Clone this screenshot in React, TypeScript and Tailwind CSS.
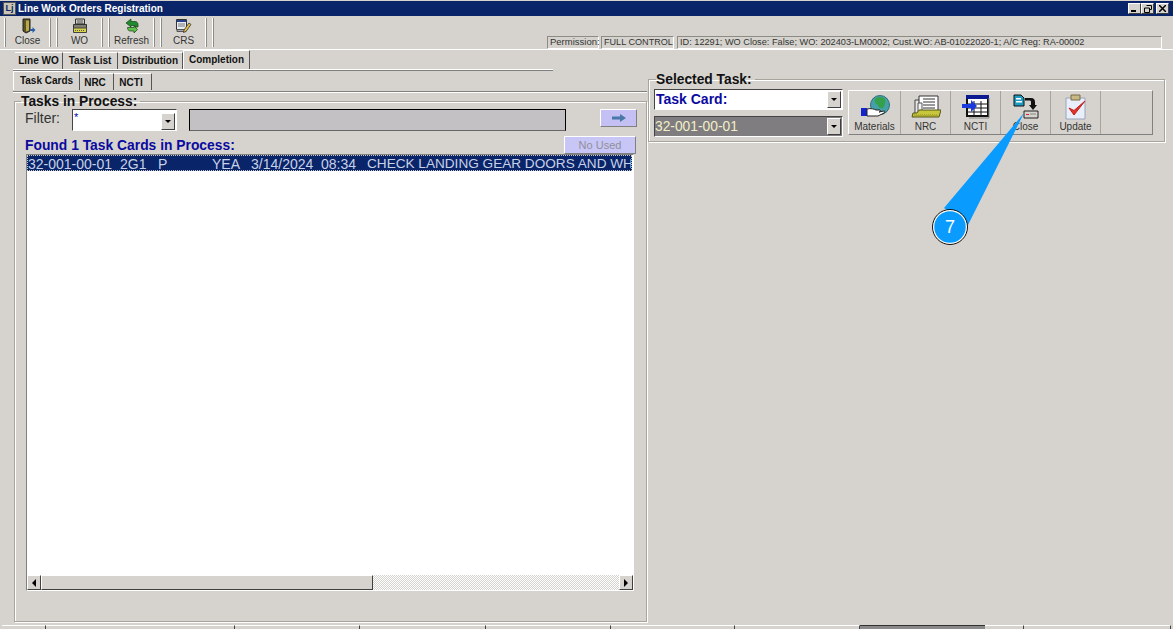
import type { ReactNode } from "react";

// toolbar icons
function DoorIcon() {
  return (
    <svg width="16" height="16" viewBox="0 0 16 16">
      <path d="M3 1h7v12l-4 2-3-2z" fill="#5c5220" stroke="#222" />
      <path d="M6 2.500h3v10l-3 1z" fill="#b8a850" />
      <path d="M10 11h2.500V9l3 3-3 3v-2H10z" fill="#2a5ea8" />
    </svg>
  );
}

function PrinterIcon() {
  return (
    <svg width="16" height="16" viewBox="0 0 16 16">
      <path d="M3.500 1h9v5h-9z" fill="#d0d0c8" stroke="#333" />
      <path d="M5 3h6M5 5h6" stroke="#555" />
      <path d="M1.500 6.500h13v5h-13z" fill="#7f7f70" stroke="#333" />
      <path d="M1.500 10h13v4.500h-13z" fill="#d8d44a" stroke="#444" />
      <path d="M3 12.500h10" stroke="#555" strokeDasharray="1 1" />
    </svg>
  );
}

function RefreshIcon() {
  return (
    <svg width="16" height="16" viewBox="0 0 16 16">
      <path d="M2 5 7 1v2.500h4c2 0 3 1.500 3 3V9h-3V7.500H7V9z" fill="#1f8a2e" stroke="#164016" strokeWidth=".7" />
      <path d="M5 9.500h5V8l3.500 3.500L10 15v-2H6c-1.500 0-2.500-1.500-2.500-3.500z" fill="#5fc04a" stroke="#164016" strokeWidth=".7" />
    </svg>
  );
}

function CrsIcon() {
  return (
    <svg width="17" height="16" viewBox="0 0 17 16">
      <path d="M1.500 1.500h10v10h-10z" fill="#e8ecf4" stroke="#333" />
      <path d="M2 2h9v2H2z" fill="#27408b" />
      <path d="M3 6h7M3 8h7" stroke="#777" />
      <path d="M2 11.500h9v2H2z" fill="#a8a8a8" stroke="#555" />
      <path d="M9 12 14 5l2 1.500-5 7-2.500 1z" fill="#e2c24a" stroke="#333" strokeWidth=".8" />
    </svg>
  );
}

// button panel icons
function GlobeHandIcon() {
  return (
    <svg width="30" height="24" viewBox="0 0 30 24">
      <circle cx="20" cy="10" r="9.500" fill="#45a0a8" stroke="#2f6f78" />
      <path d="M15 4c3-3 8-2 10 0 1 3 0 6-2 9-3 1-5-1-5-3-2-1-4-3-3-6z" fill="#35a04a" />
      <path d="M1 13h6v8H1z" fill="#1526c8" />
      <path d="M7 14c4-1 7 0 9 1h4c1 1 0 2-1 2l5-1c1 0 1 1 0 2l-6 3H7z" fill="#fff" stroke="#222" />
    </svg>
  );
}

function FolderIcon() {
  return (
    <svg width="30" height="26" viewBox="0 0 30 26">
      <path d="M4 6h6v14H4z" fill="#e8e8e8" stroke="#444" />
      <path d="M8 2h19v17H8z" fill="#fff" stroke="#333" />
      <path d="M12 5h12M12 8h12M12 11h12M12 14h12" stroke="#333" />
      <path d="M7 9h4v11H7z" fill="#f4f4f4" stroke="#555" />
      <path d="M2 19 1 23h27l2-7H8l-2 3z" fill="#c8c63a" stroke="#55551a" />
      <path d="M3 21h24M4 22h23" stroke="#8e8e20" strokeDasharray="1 1" />
    </svg>
  );
}

function GridArrowIcon() {
  return (
    <svg width="28" height="24" viewBox="0 0 28 24">
      <path d="M5 1h21v20H5z" fill="#fff" stroke="#111" strokeWidth="2" />
      <path d="M4 0h23v4H4z" fill="#0b1a8e" />
      <path d="M12 6v14M19 6v14M6 9h19M6 13h19M6 17h19" stroke="#111" />
      <path d="M27 3v20H7" fill="none" stroke="#888" />
      <path d="M0 9h9V5l6 6-6 6v-4H0z" fill="#1a3ae0" />
    </svg>
  );
}

function CloseTaskIcon() {
  return (
    <svg width="26" height="26" viewBox="0 0 26 26">
      <path d="M1 1h7l3 3v8H1z" fill="#1f9ac0" stroke="#111" />
      <path d="M3 4h5v1.500H3zM3 7h6v1.500H3z" fill="#fff" />
      <path d="M12 4h6c3 0 4 2 4 4v3h2l-4 5-4-5h2V8c0-1-.5-1.500-1.500-1.500H12z" fill="#111" />
      <path d="M11 17h14v7H11z" fill="#d6d3ce" stroke="#222" />
      <path d="M13 20h3v1h-3z" fill="#d8232a" />
      <path d="M17 20h6" stroke="#888" />
    </svg>
  );
}

function ClipboardCheckIcon() {
  return (
    <svg width="24" height="26" viewBox="0 0 24 26">
      <path d="M2 4h19v21H2z" fill="#e8effa" stroke="#9aa4b8" />
      <path d="M7 1h9v5H7z" fill="#c8b888" stroke="#7a6c44" />
      <path d="M5 14 10 21 21 7 10 16.500z" fill="#e0342a" stroke="#c0201a" />
    </svg>
  );
}

function ToolButton({ icon, label }: { icon: ReactNode; label: string }) {
  return (
    <div className="w-[43px] flex flex-col items-center -mt-[1px]">
      <div className="h-[18px] flex items-center">{icon}</div>
      <span className="text-[10px] leading-[12px] text-[#333]">{label}</span>
    </div>
  );
}

function ToolSep({ gap }: { gap?: boolean }) {
  return <div className={`w-[2px] h-[29px] border-l border-r border-l-[#fff] border-r-[#8c8c84] ${gap ? "ml-[5px]" : ""}`} />;
}

function Tab({ label, className, active }: { label: string; className: string; active?: boolean }) {
  return (
    <div
      className={`${className} flex items-center justify-center font-bold text-[10px] text-[#111] border-t border-t-white border-r border-r-[#555] ${
        active ? "h-[19px] pb-[2px] border-l border-l-white" : "h-[17px]"
      }`}
    >
      {label}
    </div>
  );
}

function ComboArrow() {
  return (
    <div className="w-[14px] h-[17px] shrink-0 bg-[#d6d3ce] border border-t-white border-l-white border-r-[#404040] border-b-[#404040] flex items-center justify-center">
      <div className="w-0 h-0 border-l-[3px] border-r-[3px] border-t-[3px] border-l-transparent border-r-transparent border-t-black" />
    </div>
  );
}

function PanelButton({ icon, label, width = "w-[50px]" }: { icon: ReactNode; label: string; width?: string }) {
  return (
    <div className={`${width} h-full flex flex-col items-center justify-end pb-[1px] border-r border-r-[#a8a49c]`}>
      <div className="flex-1 flex items-center pt-[1px]">{icon}</div>
      <span className="text-[10px] leading-[12px] text-[#333]">{label}</span>
    </div>
  );
}

function StatusCell({ width, dark }: { width: string; dark?: boolean }) {
  return (
    <div
      className={`${width} h-[16px] border-t ${
        dark ? "bg-[#8a8a8a] border-t-[#333]" : "bg-[#d6d3ce] border-t-white border-r border-r-[#444]"
      }`}
    />
  );
}

const infoCell =
  "h-[13px] flex items-center px-[2px] whitespace-nowrap text-[#333] border border-t-[#8c8c84] border-l-[#8c8c84] border-r-white border-b-white";
const winButton =
  "w-[13px] h-[11px] bg-[#d6d3ce] border border-t-white border-l-white border-r-[#404040] border-b-[#404040] flex items-center justify-center";

export default function App() {
  return (
    <div className="relative w-[1173px] h-[629px] overflow-hidden bg-[#d6d3ce] pt-[1px] font-['Liberation_Sans',Arial,sans-serif]">
      {/* title bar */}
      <div className="h-[15px] bg-[#0a246a] flex items-center px-[3px]">
        <div className="w-[13px] h-[13px] bg-[#c9c4b4] border border-[#555] flex items-center justify-center text-[9px] font-bold text-[#0a246a] leading-none">
          Lj
        </div>
        <span className="ml-[2px] text-[10px] font-bold text-white">Line Work Orders Registration</span>
        <div className="ml-auto flex mr-[1px]">
          <div className={winButton}>
            <svg width="7" height="7" viewBox="0 0 7 7"><path d="M0 5h5v2H0z" fill="#000" /></svg>
          </div>
          <div className={winButton}>
            <svg width="8" height="8" viewBox="0 0 8 8"><path d="M2.500.5h5v4h-2M.5 3h5v4.500h-5z" fill="none" stroke="#000" /></svg>
          </div>
          <div className={`${winButton} ml-[2px]`}>
            <svg width="7" height="7" viewBox="0 0 7 7"><path d="m0 0 7 7M7 0 0 7" stroke="#000" strokeWidth="1.500" /></svg>
          </div>
        </div>
      </div>

      {/* toolbar */}
      <div className="h-[34px] flex items-center pl-[4px] border-b border-b-white">
        <ToolSep />
        <ToolButton icon={<DoorIcon />} label="Close" />
        <ToolSep />
        <ToolSep gap />
        <ToolButton icon={<PrinterIcon />} label="WO" />
        <ToolSep />
        <ToolSep gap />
        <ToolButton icon={<RefreshIcon />} label="Refresh" />
        <ToolSep />
        <ToolSep gap />
        <ToolButton icon={<CrsIcon />} label="CRS" />
        <ToolSep />
        <ToolSep gap />
        <div className="ml-auto mr-[11px] mt-[20px] flex gap-[2px]">
          <div className={`${infoCell} w-[52px] text-[9.500px]`}>Permission:</div>
          <div className={`${infoCell} w-[73px] text-[9.100px]`}>FULL CONTROL</div>
          <div className={`${infoCell} w-[485px] ml-[1px] text-[9.200px]`}>
            ID: 12291; WO Close: False; WO: 202403-LM0002; Cust.WO: AB-01022020-1; A/C Reg: RA-00002
          </div>
        </div>
      </div>

      {/* tab strips */}
      <div className="h-[19px] pl-[15px] flex items-end">
        <Tab label="Line WO" className="w-[48px] pb-[1px]" />
        <Tab label="Task List" className="w-[55px] pb-[1px]" />
        <Tab label="Distribution" className="w-[65px] pb-[1px]" />
        <Tab label="Completion" className="w-[67px]" active />
      </div>
      <div className="ml-[13px] w-[540px] h-[2px] bg-[#808080] border-t border-t-white" />
      <div className="h-[20px] pl-[13px] flex items-start">
        <Tab label="Task Cards" className="w-[67px]" active />
        <Tab label="NRC" className="w-[34px] mt-[2px] pr-[3px]" />
        <Tab label="NCTI" className="w-[38px] mt-[2px] pr-[3px]" />
      </div>
      <div className="ml-[13px] w-[634px] h-[2px] bg-[#808080] border-b border-b-white" />

      <div className="flex items-start pl-[14px]">
        {/* tasks in process */}
        <fieldset className="w-[633px] min-w-0 h-[529px] border border-[#a8a49c] shadow-[inset_1px_1px_0_#fff,1px_1px_0_#fff] pl-[11px] pr-[12px]">
          <legend className="-ml-[5px] pr-[3px] pt-[1px] text-[13.800px] leading-[16px] font-bold text-[#111]">Tasks in Process:</legend>
          <div className="h-[22px] -mt-[1px] flex items-center">
            <span className="w-[46px] shrink-0 -ml-[1px] pb-[4px] text-[14px] text-[#333]">Filter:</span>
            <div className="w-[105px] h-[22px] ml-[1px] shrink-0 bg-white border border-t-[#444] border-l-[#444] border-r-white border-b-white flex justify-between items-start">
              <span className="text-[11px] text-[#0000a0] pl-[1px] leading-[14px]">*</span>
              <div className="mt-[3px] mr-[1px]"><ComboArrow /></div>
            </div>
            <div className="ml-[12px] w-[377px] h-[22px] shrink-0 bg-[#c3c1c3] border border-black border-b-[#666]" />
            <div className="ml-[34px] w-[37px] h-[18px] shrink-0 -mt-[4px] bg-[#c4c0f4] border border-t-white border-l-white border-r-[#808080] border-b-[#808080] flex items-center justify-center">
              <svg width="14" height="8" viewBox="0 0 14 8">
                <path d="M0 2.500h8V0l6 4-6 4V5.500H0z" fill="#4a78a8" />
              </svg>
            </div>
          </div>
          <div className="mt-[4px] h-[20px] flex items-center justify-between">
            <span className="-ml-[1px] text-[13.850px] leading-[16px] font-bold text-[#0a0aa0]">Found 1 Task Cards in Process:</span>
            <div className="w-[72px] h-[18px] -mr-[2px] bg-[#c8c6f6] border border-t-white border-l-white border-r-[#808080] border-b-[#808080] flex items-center justify-center text-[11px] text-[#8f8f99]">
              No Used
            </div>
          </div>
          {/* list */}
          <div className="-mt-[1px] w-[608px] h-[437px] bg-white border border-t-[#808080] border-l-[#808080] border-r-white border-b-white flex flex-col justify-between">
            <div className="h-[16px] mr-[1px] bg-[#0a246a] border border-dotted border-[#c8c6c0] text-[#c8d2e6] text-[14px] leading-[16px] flex whitespace-nowrap overflow-hidden">
              <span className="w-[92px] shrink-0">32-001-00-01</span>
              <span className="w-[38px] shrink-0">2G1</span>
              <span className="w-[54px] shrink-0">P</span>
              <span className="w-[39px] shrink-0">YEA</span>
              <span className="w-[70px] shrink-0">3/14/2024</span>
              <span className="w-[46px] shrink-0">08:34</span>
              <span className="text-[13.600px]">CHECK LANDING GEAR DOORS AND WH</span>
            </div>
            <div className="h-[15px] flex">
              <div className="w-[14px] bg-[#d6d3ce] border border-t-white border-l-white border-r-[#404040] border-b-[#404040] flex items-center justify-center">
                <div className="w-0 h-0 border-t-[4px] border-b-[4px] border-r-[4px] border-t-transparent border-b-transparent border-r-black" />
              </div>
              <div className="w-[332px] bg-[#d6d3ce] border border-t-white border-l-white border-r-[#404040] border-b-[#404040]" />
              <div className="flex-1 bg-[repeating-conic-gradient(#d6d3ce_0_25%,#ffffff_0_50%)] bg-[length:2px_2px]" />
              <div className="w-[14px] bg-[#d6d3ce] border border-t-white border-l-white border-r-[#404040] border-b-[#404040] flex items-center justify-center">
                <div className="w-0 h-0 border-t-[4px] border-b-[4px] border-l-[4px] border-t-transparent border-b-transparent border-l-black" />
              </div>
            </div>
          </div>
        </fieldset>

        {/* selected task */}
        <fieldset className="ml-[1px] w-[517px] min-w-0 h-[71px] -mt-[22px] border border-[#a8a49c] shadow-[inset_1px_1px_0_#fff,1px_1px_0_#fff] pl-[5px] pt-[1px] flex">
          <legend className="ml-[2px] pr-[3px] pt-[1px] text-[13.800px] leading-[16px] font-bold text-[#111]">Selected Task:</legend>
          <div className="flex">
            <div className="w-[189px] flex flex-col gap-[6px]">
              <div className="h-[21px] bg-white border border-t-[#444] border-l-[#444] border-r-white border-b-white flex items-center justify-between">
                <span className="pl-[1px] text-[14px] font-bold text-[#0a0aa0]">Task Card:</span>
                <div className="mr-[1px]"><ComboArrow /></div>
              </div>
              <div className="h-[21px] bg-[#7f7d7f] border border-t-[#444] border-l-[#444] border-r-white border-b-white flex items-center justify-between">
                <span className="pt-[1px] text-[13.800px] text-[#f2efc8]">32-001-00-01</span>
                <div className="mr-[1px]"><ComboArrow /></div>
              </div>
            </div>
            <div className="ml-[5px] mt-[1px] w-[305px] h-[45px] border border-t-white border-l-white border-r-[#808080] border-b-[#808080] flex">
              <PanelButton icon={<GlobeHandIcon />} label="Materials" width="w-[52px]" />
              <PanelButton icon={<FolderIcon />} label="NRC" />
              <PanelButton icon={<GridArrowIcon />} label="NCTI" />
              <PanelButton icon={<CloseTaskIcon />} label="Close" />
              <PanelButton icon={<ClipboardCheckIcon />} label="Update" />
            </div>
          </div>
        </fieldset>
      </div>

      {/* status bar */}
      <div className="absolute left-0 right-0 top-[625px] flex">
        <StatusCell width="w-[44px] ml-[2px]" />
        <StatusCell width="w-[189px]" />
        <StatusCell width="w-[125px]" />
        <StatusCell width="w-[126px]" />
        <StatusCell width="w-[125px]" />
        <StatusCell width="w-[124px]" />
        <StatusCell width="w-[125px]" />
        <StatusCell width="w-[125px]" dark />
        <StatusCell width="w-[39px]" />
        <StatusCell width="w-[147px]" />
      </div>

      {/* callout */}
      <svg className="absolute left-[925px] top-[105px]" width="105" height="145" viewBox="925 105 105 145">
        <path d="M1024 113 944 208 968 225z" fill="#0a9bff" />
        <circle cx="950" cy="227" r="16.500" fill="#0a9bff" stroke="#fff" strokeWidth="1.500" />
        <circle cx="950" cy="227" r="17.500" fill="none" stroke="#111" strokeWidth="1" />
      </svg>
      <div className="absolute left-[933px] top-[216px] w-[34px] text-center text-[18px] leading-[22px] text-white">7</div>
    </div>
  );
}
